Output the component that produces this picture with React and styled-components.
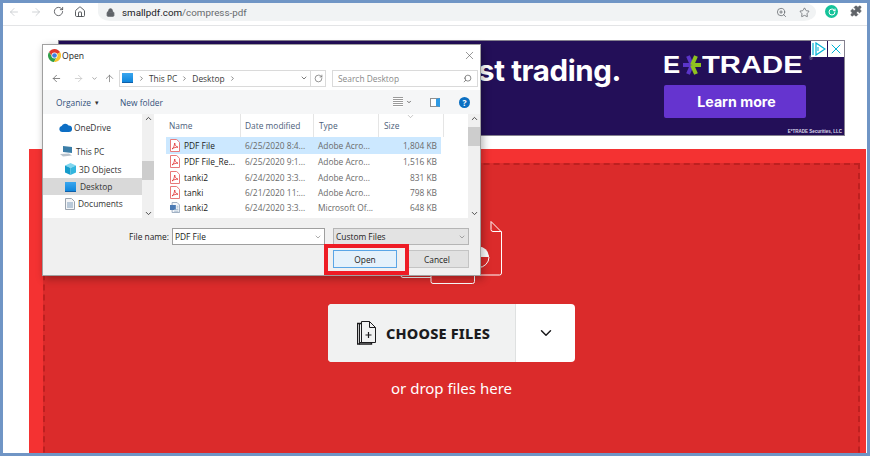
import React from "react";
import styled, { createGlobalStyle } from "styled-components";
import {
  ArrowLeft,
  ArrowRight,
  ArrowUp,
  RotateCw,
  House,
  Lock,
  ZoomIn,
  Star,
  Puzzle,
  ChevronDown,
  ChevronUp,
  ChevronRight,
  Search,
  X,
} from "lucide-react";

const GlobalStyle = createGlobalStyle`
  html, body {
    margin: 0;
    padding: 0;
    background: #fff;
    overflow: hidden;
  }
`;

const Frame = styled.div`
  position: relative;
  box-sizing: border-box;
  width: 870px;
  height: 456px;
  border: 3px solid #7095c5;
  background: #fff;
  overflow: hidden;
  font-family: "Open Sans", "Noto Sans", sans-serif;
  display: flex;
  flex-direction: column;
`;

const Toolbar = styled.div`
  flex: none;
  height: 22px;
  display: flex;
  align-items: flex-start;
  border-bottom: 1px solid #e3e4e6;
  color: #5f6368;
`;

const NavButton = styled.span`
  width: 22px;
  height: 17px;
  display: flex;
  align-items: center;
  justify-content: center;
  color: ${(p) => (p.$off ? "#c2c5c9" : "#4a4d51")};
`;

const UrlPill = styled.div`
  flex: none;
  width: 718px;
  height: 18px;
  margin-left: 7px;
  box-sizing: border-box;
  display: flex;
  align-items: center;
  padding: 0 6px 0 8px;
  background: #f1f3f4;
  border-radius: 0 12px 12px 12px / 0 9px 9px 9px;
`;

const UrlText = styled.span`
  margin-left: 7px;
  font-family: "Roboto", sans-serif;
  font-size: 9.8px;
  color: #676a6e;
  b {
    font-weight: 400;
    color: #202124;
  }
`;

const UrlIcons = styled.div`
  margin-left: auto;
  display: flex;
  align-items: center;
  gap: 12px;
  color: #5f6368;
`;

const Grammarly = styled.span`
  margin: 2px 0 0 9px;
  width: 13px;
  height: 13px;
  border-radius: 50%;
  background: #15c39a;
  display: flex;
  align-items: center;
  justify-content: center;
  color: #fff;
`;

const ExtensionSlot = styled.span`
  margin: 2px 0 0 12px;
  display: flex;
  color: #5f6368;
`;

const Content = styled.div`
  flex: 1;
  min-height: 0;
  display: flex;
  flex-direction: column;
  padding: 14px 1px 0 26px;
`;

const Ad = styled.div`
  flex: none;
  position: relative;
  box-sizing: border-box;
  width: 787px;
  height: 96px;
  margin-left: 29px;
  background: #230f58;
  border: 1px solid #85818f;
  display: flex;
  align-items: flex-start;
  justify-content: flex-end;
  padding-right: 38px;
`;

const AdHeadline = styled.div`
  margin: 11px 43px 0 0;
  font-family: "Inter", sans-serif;
  font-weight: 700;
  font-size: 29.5px;
  line-height: 36px;
  letter-spacing: -0.4px;
  color: #fff;
`;

const AdBrand = styled.div`
  width: 142px;
  display: flex;
  flex-direction: column;
`;

const Logo = styled.div`
  height: 40px;
  margin-top: 4px;
  display: flex;
  align-items: center;
  font-family: "Liberation Sans", sans-serif;
  font-weight: 700;
  font-size: 23px;
  color: #fff;
`;

const LogoWord = styled.span`
  display: inline-block;
  width: ${(p) => p.$w}px;
  margin-left: ${(p) => p.$ml || 0}px;
  transform: scaleX(${(p) => p.$scale});
  transform-origin: left;
`;

const LogoMark = styled.sup`
  position: absolute;
  right: 31px;
  top: 15px;
  font-size: 5px;
  line-height: 5px;
  color: #9c97ad;
  font-weight: 400;
`;

const AdButton = styled.div`
  height: 33px;
  border-radius: 2px;
  background: #6534cf;
  color: #fff;
  font-family: "Inter", sans-serif;
  font-weight: 700;
  font-size: 14.2px;
  padding-left: 3px;
  display: flex;
  align-items: center;
  justify-content: center;
`;

const AdSmall = styled.div`
  position: absolute;
  right: 2px;
  bottom: 1px;
  font-family: "Liberation Sans", sans-serif;
  font-size: 4.5px;
  font-weight: 700;
  color: #dcd8e8;
`;

const AdChoices = styled.div`
  position: absolute;
  top: 0;
  right: 0;
  display: flex;
  gap: 1px;
`;

const AdChoice = styled.span`
  width: 16px;
  height: 16px;
  background: #fff;
  display: flex;
  align-items: center;
  justify-content: center;
  color: #00b2d4;
`;

const DropArea = styled.div`
  flex: none;
  margin-top: 13px;
  height: 340px;
  background: #f43232;
  padding: 14px 6px 0 14px;
`;

const DropInner = styled.div`
  height: 100%;
  box-sizing: border-box;
  background: #db2b2b;
  border: 2px dashed #bd2020;
  display: flex;
  flex-direction: column;
  align-items: center;
  padding-top: 56px;
`;

const Illustration = styled.svg`
  flex: none;
  display: block;
  overflow: visible;
`;

const ChooseBox = styled.div`
  flex: none;
  margin-top: 18px;
  width: 247px;
  height: 58px;
  border-radius: 4px;
  background: #fff;
  display: flex;
  overflow: hidden;
`;

const ChooseMain = styled.div`
  width: 188px;
  box-sizing: border-box;
  background: #f1f2f2;
  border-right: 1px solid #dfe1e1;
  display: flex;
  align-items: center;
  justify-content: center;
  padding-left: 4px;
  gap: 10px;
`;

const ChooseLabel = styled.span`
  font-family: "Noto Sans", sans-serif;
  font-weight: 800;
  font-size: 14.5px;
  letter-spacing: 0.2px;
  color: #1c1c1e;
`;

const ChooseMore = styled.div`
  flex: 1;
  display: flex;
  align-items: center;
  justify-content: center;
  color: #1c1c1e;
`;

const DropHint = styled.div`
  margin-top: 14px;
  font-family: "Noto Sans", sans-serif;
  font-size: 15px;
  line-height: 24px;
  color: #fff;
`;

const Dialog = styled.div`
  position: absolute;
  left: 39px;
  top: 41px;
  width: 439px;
  height: 232px;
  box-sizing: border-box;
  background: #fff;
  border: 1px solid #a0a0a0;
  box-shadow: 2px 3px 8px rgba(0, 0, 0, 0.3);
  display: flex;
  flex-direction: column;
  font-size: 8.4px;
  color: #333;
`;

const TitleBar = styled.div`
  flex: none;
  height: 21px;
  display: flex;
  align-items: center;
  padding: 0 4px 0 5px;
  gap: 1px;
  color: #222;
  font-size: 8.6px;
  span {
    margin-right: auto;
  }
`;

const AddressRow = styled.div`
  flex: none;
  height: 24px;
  display: flex;
  align-items: center;
  color: #777;
`;

const RowIcon = styled.span`
  width: ${(p) => p.$w}px;
  margin-left: ${(p) => p.$ml || 0}px;
  display: flex;
  justify-content: center;
  color: ${(p) => p.$color || "#6d6d6d"};
`;

const AddressBox = styled.div`
  box-sizing: border-box;
  width: 207px;
  height: 17px;
  border: 1px solid #dadada;
  display: flex;
  align-items: center;
  padding-left: 2px;
  gap: 4px;
  color: #3a3a3a;
  margin-left: 1px;
`;

const FolderBlue = styled.span`
  width: 11px;
  height: 9px;
  margin-right: 1px;
  background: linear-gradient(#3aa6ee, #0f86dc);
  border-bottom: 1px solid #0f5fa8;
`;

const AddressCaret = styled.span`
  margin-left: auto;
  display: flex;
`;

const Refresh = styled.span`
  width: 14px;
  height: 15px;
  border-left: 1px solid #dadada;
  margin-left: -2px;
  display: flex;
  align-items: center;
  justify-content: center;
  color: #666;
`;

const SearchBox = styled.div`
  box-sizing: border-box;
  margin-left: 6px;
  width: 146px;
  height: 17px;
  border: 1px solid #dadada;
  display: flex;
  align-items: center;
  justify-content: space-between;
  padding: 0 5px;
  color: #8a8a8a;
`;

const SearchGlyph = styled(Search)`
  transform: scaleX(-1);
`;

const Commands = styled.div`
  flex: none;
  height: 24px;
  background: #f5f6f7;
  display: flex;
  align-items: center;
  padding-left: 13px;
  color: #33507a;
`;

const CommandLabel = styled.span`
  margin-right: ${(p) => p.$gap}px;
  display: flex;
  align-items: center;
  gap: 4px;
  &::after {
    content: "${(p) => (p.$menu ? "▾" : "")}";
    font-size: 7px;
    color: #333;
  }
`;

const ViewIcons = styled.div`
  margin-left: auto;
  display: flex;
  align-items: center;
  margin-right: 10px;
  gap: 3px;
  color: #444;
`;

const ViewList = styled.span`
  width: 10px;
  height: 10px;
  background: repeating-linear-gradient(#9a9a9a 0 1px, #fff 1px 2px);
`;

const PreviewPane = styled.span`
  box-sizing: border-box;
  width: 10px;
  height: 9px;
  margin-left: 15px;
  border: 1px solid #8f8f8f;
  border-right: 4px solid #2f9ae4;
  background: #fff;
`;

const Help = styled.span`
  width: 11px;
  height: 11px;
  margin-left: 16px;
  border-radius: 50%;
  background: #0b6fc2;
  color: #fff;
  font-size: 8.5px;
  font-weight: 700;
  line-height: 11px;
  text-align: center;
`;

const Browser = styled.div`
  flex: none;
  height: 104px;
  display: flex;
`;

const NavPane = styled.div`
  flex: none;
  width: 99px;
  position: relative;
  overflow: hidden;
  padding-top: 5px;
`;

const NavItem = styled.div`
  height: 17.3px;
  box-sizing: border-box;
  display: flex;
  align-items: center;
  gap: 3px;
  padding-left: ${(p) => p.$indent}px;
  margin-bottom: ${(p) => p.$after || 0}px;
  background: ${(p) => (p.$active ? "#d9d9d9" : "transparent")};
  color: #333;
`;

const Scrollbar = styled.div`
  flex: none;
  width: 12px;
  display: flex;
  flex-direction: column;
  align-items: center;
  justify-content: space-between;
  background: #f0f0f0;
  color: #444;
  position: relative;
`;

const Thumb = styled.span`
  position: absolute;
  left: 0;
  right: 0;
  top: ${(p) => p.$top}px;
  height: ${(p) => p.$h}px;
  background: #cdcdcd;
`;

const ListPane = styled.div`
  flex: 1;
  min-width: 0;
  position: relative;
  padding-left: 12px;
`;

const HeadRow = styled.div`
  display: grid;
  grid-template-columns: 75px 73px 65px 65px;
  align-items: center;
  width: 278px;
  height: 23px;
`;

const HeadCell = styled.span`
  height: 100%;
  box-sizing: border-box;
  padding-left: ${(p) => p.$pad}px;
  display: flex;
  align-items: center;
  border-right: 1px solid #e5e5e5;
  color: #4c607a;
`;

const FileRow = styled.div`
  display: grid;
  grid-template-columns: 75px 73px 65px 62px;
  align-items: center;
  width: 275px;
  height: ${(p) => (p.$selected ? 17 : 15.4)}px;
  background: ${(p) => (p.$selected ? "#cce8ff" : "transparent")};
  color: #6a6a6a;
`;

const NameCell = styled.span`
  display: flex;
  align-items: center;
  gap: 4px;
  padding-left: 4px;
  color: #222;
  white-space: nowrap;
  overflow: hidden;
`;

const Cell = styled.span`
  white-space: nowrap;
  overflow: hidden;
  padding-left: ${(p) => p.$pad}px;
`;

const SizeCell = styled.span`
  text-align: right;
  padding-right: 4px;
`;

const SortCaret = styled.span`
  position: absolute;
  left: 252px;
  top: -2px;
  color: #9a9a9a;
  display: flex;
`;

const Footer = styled.div`
  flex: 1;
  background: #f0f0f0;
  position: relative;
  padding: 10px 11px 0 0;
  display: flex;
  flex-direction: column;
  align-items: flex-end;
  gap: 5px;
`;

const FooterRow = styled.div`
  display: flex;
  align-items: center;
`;

const FieldLabel = styled.span`
  margin-right: 3px;
  color: #222;
`;

const NameInput = styled.div`
  box-sizing: border-box;
  width: 153px;
  height: 17px;
  background: #fff;
  border: 1px solid #9f9f9f;
  padding: 0 2px;
  display: flex;
  align-items: center;
  justify-content: space-between;
  color: #222;
`;

const TypeSelect = styled.div`
  box-sizing: border-box;
  width: 136px;
  margin-left: 8px;
  height: 17px;
  background: #e3e3e3;
  border: 1px solid #b5b5b5;
  padding: 0 2px;
  display: flex;
  align-items: center;
  justify-content: space-between;
  color: #222;
`;

const DialogButton = styled.div`
  box-sizing: border-box;
  width: 64px;
  height: 18px;
  margin-left: ${(p) => (p.$primary ? 0 : 8)}px;
  background: ${(p) => (p.$primary ? "#e5f1fb" : "#e1e1e1")};
  border: 1px solid ${(p) => (p.$primary ? "#5aa5e6" : "#c4c4c4")};
  display: flex;
  align-items: center;
  justify-content: center;
  color: #222;
`;

const Highlight = styled.div`
  position: absolute;
  left: 321px;
  top: 241px;
  width: 85px;
  height: 31px;
  box-sizing: border-box;
  border: 4px solid #ee1c25;
  pointer-events: none;
`;

const files = [
  { name: "PDF File", date: "6/25/2020 8:4...", type: "Adobe Acro...", size: "1,804 KB", selected: true },
  { name: "PDF File_Re...", date: "6/25/2020 9:1...", type: "Adobe Acro...", size: "1,516 KB" },
  { name: "tanki2", date: "6/24/2020 3:3...", type: "Adobe Acro...", size: "831 KB" },
  { name: "tanki", date: "6/21/2020 11:...", type: "Adobe Acro...", size: "798 KB" },
  { name: "tanki2", date: "6/24/2020 3:3...", type: "Microsoft Of...", size: "648 KB", word: true },
];

const ChromeLogo = () => (
  <svg width="13" height="13" viewBox="0 0 24 24">
    <path d="M12 12 L22.4 6 A12 12 0 0 0 2 5.4 L7 14z" fill="#e0392d" />
    <path d="M12 12 L7 14 L2 5.4 A12 12 0 0 0 11 24 L17 14z" fill="#2f9e49" />
    <path d="M12 12 L17 14 L11 24 A12 12 0 0 0 22.4 6z" fill="#f7c530" />
    <circle cx="12" cy="12" r="5.6" fill="#fff" />
    <circle cx="12" cy="12" r="4.3" fill="#3d7ee4" />
  </svg>
);

const PdfIcon = () => (
  <svg width="10" height="13" viewBox="0 0 10 13" style={{ flex: "none" }}>
    <path d="M.5.5h6.2l2.800 2.800v9.200h-9z" fill="#fff" stroke="#e87a7a" />
    <path
      d="M2 10c1.400-.8 2.400-3 2.700-6 .4 2.400 1.300 3.600 3.300 4.200-2.200-.1-4 .4-6 1.800z"
      fill="none"
      stroke="#e02f2f"
      strokeWidth=".8"
    />
  </svg>
);

const WordIcon = () => (
  <svg width="10" height="13" viewBox="0 0 12 13" style={{ flex: "none" }}>
    <path d="M2.500.5h6l3 3v9h-9z" fill="#f3f6fa" stroke="#8fa2b8" />
    <rect x="0" y="3.500" width="7" height="6" fill="#4a7ab5" />
    <path d="M5 9h5M5 11h5M8 5h2M8 7h2" stroke="#9db2c9" />
  </svg>
);

const CloudIcon = () => (
  <svg width="13" height="9" viewBox="0 0 13 9" style={{ marginRight: -1 }}>
    <path
      d="M3 9a3 3 0 0 1-.4-5.900A4 4 0 0 1 9.600 2.400 3.300 3.300 0 0 1 10 9z"
      fill="#0d6ec4"
    />
  </svg>
);

const PcIcon = () => (
  <svg width="13" height="11" viewBox="0 0 13 11">
    <path d="M3 0l9 1v6L3 6z" fill="#3b7ea8" />
    <path d="M0 8l9-.5 3 2-9 1z" fill="#b9c2cb" />
  </svg>
);

const CubeIcon = () => (
  <svg width="11" height="12" viewBox="0 0 11 12">
    <path d="M5.500 0L11 2.500 5.500 5 0 2.500z" fill="#7fd6ef" />
    <path d="M0 2.500L5.500 5v7L0 9.500z" fill="#159ccb" />
    <path d="M11 2.500L5.500 5v7L11 9.500z" fill="#33b6de" />
  </svg>
);

const DocsIcon = () => (
  <svg width="10" height="12" viewBox="0 0 10 12">
    <path d="M.5.5h6l3 3v8h-9z" fill="#f4f5f7" stroke="#9aa3ad" />
    <path d="M2 5h6M2 7h6M2 9h6" stroke="#7f9dbb" />
  </svg>
);

const FilesGlyph = () => (
  <svg width="19" height="24" viewBox="0 0 19 24" fill="none" stroke="#1c1c1e" strokeWidth="1">
    <path d="M4.500.5h8l6 6v15h-14z" fill="#f1f2f2" />
    <path d="M12.500.5v6h6" />
    <path d="M4.500 2.500h-2v21M2.500 21.500h14" />
    <path d="M4.500 2.500h-4v20.500h14V21.500" strokeWidth="1.400" />
    <path d="M11.500 11v6M8.500 14h6" strokeWidth="1.200" />
  </svg>
);

const Pages = () => (
  <Illustration width="102" height="65" viewBox="0 0 102 65" fill="none" stroke="#fff" strokeWidth="1">
    <path d="M90 .5l10.500 10.500v41a2 2 0 0 1-2 2H73.500" />
    <path d="M90 .5v8a2 2 0 0 0 2 2h8.500" />
    <path d="M73.500 54v6.500a2 2 0 0 1-2 2H32a2 2 0 0 1-2-2V54" />
    <path d="M30 56.500H2a2 2 0 0 1-2-2V52" />
    <path d="M67 36a10.500 10.500 0 0 1 21 0z" fill="#fff" stroke="none" />
    <path d="M67 36a10.500 10.500 0 0 0 21 0" />
  </Illustration>
);

const LogoStar = () => (
  <svg width="20" height="22" viewBox="0 0 20 22" style={{ flex: "none", marginLeft: 0 }}>
    <path d="M10 11L6 2M10 11L1 11M10 11L6 20" stroke="#5b35c9" strokeWidth="4" fill="none" />
    <path d="M10 11L14 2M10 11L19 11M10 11L14 20" stroke="#8fc31f" strokeWidth="4" fill="none" />
  </svg>
);

const App = () => {
  return (
    <Frame>
      <GlobalStyle />
      <Toolbar>
        <NavButton $off>
          <ArrowLeft size={12} strokeWidth={1.5} />
        </NavButton>
        <NavButton $off>
          <ArrowRight size={12} strokeWidth={1.5} />
        </NavButton>
        <NavButton>
          <RotateCw size={11} strokeWidth={1.8} />
        </NavButton>
        <NavButton>
          <House size={12} strokeWidth={1.8} />
        </NavButton>
        <UrlPill>
          <Lock size={9} strokeWidth={2.5} fill="#5f6368" color="#5f6368" />
          <UrlText>
            <b>smallpdf.com</b>/compress-pdf
          </UrlText>
          <UrlIcons>
            <ZoomIn size={11} strokeWidth={1.6} />
            <Star size={11} strokeWidth={1.6} />
          </UrlIcons>
        </UrlPill>
        <Grammarly>
          <RotateCw size={8} strokeWidth={3} />
        </Grammarly>
        <ExtensionSlot>
          <Puzzle size={12} fill="#5f6368" strokeWidth={1.5} />
        </ExtensionSlot>
      </Toolbar>

      <Content>
        <Ad>
          <AdHeadline>st trading.</AdHeadline>
          <AdBrand>
            <Logo>
              <LogoWord $w={19} $ml={-1} $scale={1.12}>
                E
              </LogoWord>
              <LogoStar />
              <LogoWord $w={102} $ml={0} $scale={1.27}>
                TRADE
              </LogoWord>
            </Logo>
            <AdButton>Learn more</AdButton>
          </AdBrand>
          <LogoMark>®</LogoMark>
          <AdSmall>E*TRADE Securities, LLC</AdSmall>
          <AdChoices>
            <AdChoice>
              <svg width="14" height="14" viewBox="0 0 14 14" fill="none" stroke="currentColor" strokeWidth="1.2">
                <path d="M1 1v12M4 1l9 6-9 6z" />
                <path d="M6 5v4" strokeWidth="1" />
              </svg>
            </AdChoice>
            <AdChoice>
              <X size={16} strokeWidth={1.5} />
            </AdChoice>
          </AdChoices>
        </Ad>

        <DropArea>
          <DropInner>
            <Pages />
            <ChooseBox>
              <ChooseMain>
                <FilesGlyph />
                <ChooseLabel>CHOOSE FILES</ChooseLabel>
              </ChooseMain>
              <ChooseMore>
                <ChevronDown size={18} strokeWidth={2} />
              </ChooseMore>
            </ChooseBox>
            <DropHint>or drop files here</DropHint>
          </DropInner>
        </DropArea>
      </Content>

      <Dialog>
        <TitleBar>
          <ChromeLogo />
          <span>Open</span>
          <X size={13} strokeWidth={1.1} color="#555" />
        </TitleBar>
        <AddressRow>
          <RowIcon $w={24} $ml={1}>
            <ArrowLeft size={11} strokeWidth={1.8} />
          </RowIcon>
          <RowIcon $w={21} $color="#c9c9c9">
            <ArrowRight size={11} strokeWidth={1.8} />
          </RowIcon>
          <RowIcon $w={11}>
            <ChevronDown size={7} strokeWidth={2} />
          </RowIcon>
          <RowIcon $w={18}>
            <ArrowUp size={11} strokeWidth={1.5} />
          </RowIcon>
          <AddressBox>
            <FolderBlue />
            <ChevronRight size={7} strokeWidth={2} />
            <span>This PC</span>
            <ChevronRight size={7} strokeWidth={2} />
            <span>Desktop</span>
            <ChevronRight size={7} strokeWidth={2} />
            <AddressCaret>
              <ChevronDown size={8} strokeWidth={2} />
            </AddressCaret>
            <Refresh>
              <RotateCw size={9} strokeWidth={1.8} />
            </Refresh>
          </AddressBox>
          <SearchBox>
            <span>Search Desktop</span>
            <SearchGlyph size={9} strokeWidth={1.8} color="#555" />
          </SearchBox>
        </AddressRow>
        <Commands>
          <CommandLabel $gap={21} $menu>
            Organize
          </CommandLabel>
          <CommandLabel $gap={0}>New folder</CommandLabel>
          <ViewIcons>
            <ViewList />
            <ChevronDown size={6} strokeWidth={3} />
            <PreviewPane />
            <Help>?</Help>
          </ViewIcons>
        </Commands>
        <Browser>
          <NavPane>
            <NavItem $indent={16} $after={7}>
              <CloudIcon />
              OneDrive
            </NavItem>
            <NavItem $indent={17}>
              <PcIcon />
              This PC
            </NavItem>
            <NavItem $indent={22}>
              <CubeIcon />
              3D Objects
            </NavItem>
            <NavItem $indent={22} $active>
              <FolderBlue />
              Desktop
            </NavItem>
            <NavItem $indent={22}>
              <DocsIcon />
              Documents
            </NavItem>
          </NavPane>
          <Scrollbar>
            <ChevronUp size={9} strokeWidth={2.5} />
            <Thumb $top={47} $h={19} />
            <ChevronDown size={9} strokeWidth={2.5} />
          </Scrollbar>
          <ListPane>
            <SortCaret>
              <ChevronDown size={9} strokeWidth={1.5} />
            </SortCaret>
            <HeadRow>
              <HeadCell $pad={3}>Name</HeadCell>
              <HeadCell $pad={4}>Date modified</HeadCell>
              <HeadCell $pad={5}>Type</HeadCell>
              <HeadCell $pad={5}>Size</HeadCell>
            </HeadRow>
            {files.map((f, i) => (
              <FileRow key={i} $selected={f.selected}>
                <NameCell>
                  {f.word ? <WordIcon /> : <PdfIcon />}
                  {f.name}
                </NameCell>
                <Cell $pad={4}>{f.date}</Cell>
                <Cell $pad={4}>{f.type}</Cell>
                <SizeCell>{f.size}</SizeCell>
              </FileRow>
            ))}
          </ListPane>
          <Scrollbar>
            <ChevronUp size={9} strokeWidth={2.5} />
            <Thumb $top={13} $h={19} />
            <ChevronDown size={9} strokeWidth={2.5} />
          </Scrollbar>
        </Browser>
        <Footer>
          <FooterRow>
            <FieldLabel>File name:</FieldLabel>
            <NameInput>
              PDF File
              <ChevronDown size={8} strokeWidth={1.6} color="#666" />
            </NameInput>
            <TypeSelect>
              Custom Files
              <ChevronDown size={8} strokeWidth={1.6} color="#666" />
            </TypeSelect>
          </FooterRow>
          <FooterRow>
            <DialogButton $primary>Open</DialogButton>
            <DialogButton>Cancel</DialogButton>
          </FooterRow>
        </Footer>
      </Dialog>
      <Highlight />
    </Frame>
  );
};

export default App;
